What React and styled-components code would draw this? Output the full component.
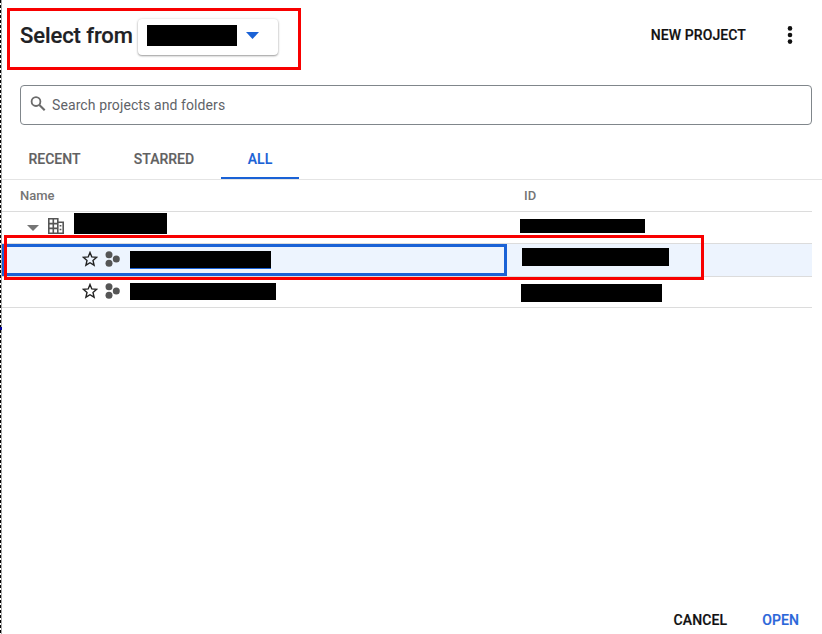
import React from 'react';
import styled, { createGlobalStyle } from 'styled-components';

const GlobalStyle = createGlobalStyle`
  * { box-sizing: border-box; }
  body { margin: 0; background: #fff; font-family: Roboto, "Liberation Sans", sans-serif; overflow: hidden; }
`;

const Dialog = styled.main`
  position: relative;
  display: flex;
  flex-direction: column;
  width: 822px;
  height: 634px;
  padding-left: 2px;
  background:
    linear-gradient(#00009c, #00009c) 0 327px / 2px 3px no-repeat,
    linear-gradient(#a8a8a8, #a8a8a8) 1px 0 / 1px 100% no-repeat,
    repeating-linear-gradient(#000 0 3px, #fff 3px 5px) 0 0 / 1px 100% no-repeat,
    #fff;
`;

const Header = styled.header`
  display: flex;
  align-items: center;
  height: 70px;
  padding-left: 18px;
`;

const Title = styled.h1`
  width: 118px;
  margin: 1px 0 0;
  color: #202124;
  font-size: 22px;
  font-weight: 500;
  line-height: 28px;
  letter-spacing: -0.08px;
  -webkit-text-stroke: 0.2px currentColor;
  white-space: nowrap;
`;

const OrgPicker = styled.button`
  display: flex;
  align-items: center;
  gap: 9px;
  width: 140px;
  height: 36px;
  margin-top: 3px;
  padding: 0 0 3px 9px;
  border: 0;
  border-radius: 4px;
  background: #fff;
  box-shadow: 0 1px 2px rgba(0, 0, 0, 0.36), 0 0 3px rgba(0, 0, 0, 0.12);
`;

const Redaction = styled.span`
  flex: none;
  width: ${({ $w }) => $w}px;
  height: ${({ $h }) => $h}px;
  margin: ${({ $m }) => $m || '0'};
  background: #000;
  border-bottom: ${({ $linked }) => ($linked ? '1px solid #1a62d6' : '0')};
`;

const TextButton = styled.button`
  padding: 0;
  border: 0;
  background: none;
  color: ${({ $primary }) => ($primary ? '#2b66d9' : '#111')};
  font: 500 14px/20px Roboto, "Liberation Sans", sans-serif;
  letter-spacing: 0.1px;
  -webkit-text-stroke: 0.2px currentColor;
`;

const HeaderActions = styled.div`
  display: flex;
  align-items: center;
  gap: 41px;
  margin: 0 29px 0 auto;
`;

const SearchField = styled.label`
  display: flex;
  align-items: center;
  width: 792px;
  height: 40px;
  margin: 15px 0 0 18px;
  padding-left: 9px;
  gap: 6px;
  border: 1px solid #80868b;
  border-radius: 4px;
  color: #5f6368;
  font-size: 14px;
  letter-spacing: 0.1px;
`;

const Tabs = styled.nav`
  display: flex;
  height: 55px;
  padding-top: 15px;
  border-bottom: 1px solid #e4e4e4;
`;

const Tab = styled.button`
  width: ${({ $w }) => $w}px;
  height: 39px;
  padding: 0;
  border: 0;
  border-bottom: 2px solid ${({ $active }) => ($active ? '#1a62d6' : 'transparent')};
  background: none;
  color: ${({ $active }) => ($active ? '#1a62d6' : '#616161')};
  font: 500 14px/20px Roboto, "Liberation Sans", sans-serif;
  -webkit-text-stroke: 0.15px currentColor;
`;

const Table = styled.section`
  width: 810px;
`;

const Row = styled.div`
  display: grid;
  grid-template-columns: 505px 1fr;
  height: ${({ $h }) => $h}px;
  border-bottom: 1px solid #dcdcdc;
  background: ${({ $selected }) => ($selected ? '#edf4fe' : 'transparent')};
`;

const HeadCell = styled.div`
  padding-left: ${({ $indent }) => $indent}px;
  color: #757575;
  font-size: 13px;
  font-weight: 500;
  line-height: 31px;
`;

const Cell = styled.div`
  display: flex;
  align-items: flex-start;
  padding-left: ${({ $indent }) => $indent}px;
  border: 3px solid ${({ $focus }) => ($focus ? '#1a62d6' : 'transparent')};
  border-left-width: 2px;
`;

const Icon = styled.svg`
  flex: none;
  display: block;
  width: ${({ $w }) => $w}px;
  height: ${({ $h }) => $h}px;
  margin: ${({ $m }) => $m || '0'};
`;

const Footer = styled.footer`
  display: flex;
  justify-content: flex-end;
  gap: 35px;
  margin-top: auto;
  padding: 0 23px 4px 0;
`;

const Annotation = styled.div`
  position: absolute;
  left: ${({ $x }) => $x}px;
  top: ${({ $y }) => $y}px;
  width: ${({ $w }) => $w}px;
  height: ${({ $h }) => $h}px;
  border: 3px solid #f80000;
  pointer-events: none;
`;

const Caret = ({ color, m, w = 12, h = 6 }) => (
  <Icon $w={w} $h={h} $m={m} viewBox="0 0 12 6" preserveAspectRatio="none"><path d="M0 0h12L6 6z" fill={color} /></Icon>
);

const MoreIcon = () => (
  <Icon $w={6} $h={18} viewBox="0 0 6 18" fill="#111">
    <circle cx="3" cy="2.4" r="2.3" /><circle cx="3" cy="9" r="2.3" /><circle cx="3" cy="15.6" r="2.3" />
  </Icon>
);

const SearchIcon = () => (
  <Icon $w={16} $h={16} $m="0 0 3px" viewBox="0 0 16 16" fill="none" stroke="#6b6b6b">
    <circle cx="6" cy="5.6" r="4.4" strokeWidth="1.8" /><path d="M9.4 9l5.3 5.3" strokeWidth="2.1" />
  </Icon>
);

const BuildingIcon = () => (
  <Icon $w={16} $h={16} $m="3px 0 0 9px" viewBox="0 0 16 16" fill="none" stroke="#555">
    <path d="M.8.8h9v14.4h-9zM.8 5.6h9M.8 10.4h9M5.3.8v14.4M9.8 4.2h5.4v11H9.8" strokeWidth="1.6" />
    <path d="M11.6 7.7h1.8M11.6 11.5h1.8" strokeWidth="1.6" />
  </Icon>
);

const StarIcon = ({ top }) => (
  <Icon $w={16} $h={16} $m={`${top}px 0 0`} viewBox="0 0 16 16">
    <path d="m8 1.5 1.8 4.4 4.9.4-3.7 3.1 1.1 4.8L8 11.7l-4.1 2.5L5 9.4 1.3 6.3l4.9-.4z" fill="none" stroke="#222" strokeWidth="1.4" />
  </Icon>
);

const ProjectIcon = ({ top }) => (
  <Icon $w={15} $h={16} $m={`${top}px 0 0 7px`} viewBox="0 0 15 16" fill="#555">
    <circle cx="4" cy="3.7" r="3.5" /><circle cx="4" cy="12.3" r="3.5" /><circle cx="11.3" cy="8" r="3.5" />
  </Icon>
);

const projects = [
  { selected: true, height: 33, iconTop: 4, name: { $w: 141, $h: 18, $m: '4px 0 0 10px', $linked: true }, id: { $w: 147, $h: 18, $m: '1px 0 0' }, idIndent: 13 },
  { selected: false, height: 31, iconTop: 3, name: { $w: 146, $h: 17, $m: '3px 0 0 10px' }, id: { $w: 141, $h: 18, $m: '4px 0 0' }, idIndent: 12 },
];

export default function App() {
  return (
    <>
      <GlobalStyle />
      <Dialog>
        <Header>
          <Title>Select from</Title>
          <OrgPicker aria-label="Organization">
            <Redaction $w={90} $h={21} />
            <Caret color="#1a62d6" w={13} h={7} />
          </OrgPicker>
          <HeaderActions>
            <TextButton>NEW PROJECT</TextButton>
            <MoreIcon />
          </HeaderActions>
        </Header>
        <SearchField><SearchIcon />Search projects and folders</SearchField>
        <Tabs>
          <Tab $w={105}>RECENT</Tab>
          <Tab $w={114}>STARRED</Tab>
          <Tab $w={78} $active>ALL</Tab>
        </Tabs>
        <Table>
          <Row $h={32}><HeadCell $indent={18}>Name</HeadCell><HeadCell $indent={17}>ID</HeadCell></Row>
          <Row $h={32}>
            <Cell $indent={23}>
              <Caret color="#757575" m="10px 0 0" />
              <BuildingIcon />
              <Redaction $w={93} $h={21} $m="-2px 0 0 10px" />
            </Cell>
            <Cell $indent={11}><Redaction $w={125} $h={14} $m="4px 0 0" /></Cell>
          </Row>
          {projects.map((p, i) => (
            <Row key={i} $h={p.height} $selected={p.selected}>
              <Cell $indent={78} $focus={p.selected}>
                <StarIcon top={p.iconTop} />
                <ProjectIcon top={p.iconTop} />
                <Redaction {...p.name} />
              </Cell>
              <Cell $indent={p.idIndent}><Redaction {...p.id} /></Cell>
            </Row>
          ))}
        </Table>
        <Footer><TextButton>CANCEL</TextButton><TextButton $primary>OPEN</TextButton></Footer>
        <Annotation $x={7} $y={8} $w={294} $h={62} />
        <Annotation $x={4} $y={235} $w={700} $h={45} />
      </Dialog>
    </>
  );
}
